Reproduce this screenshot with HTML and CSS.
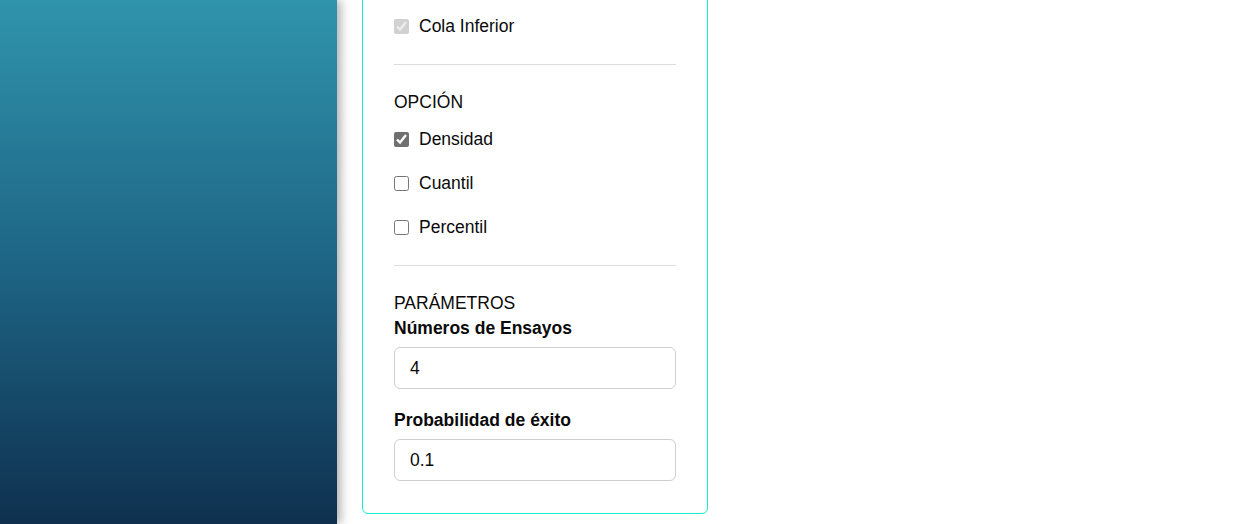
FILE: index.html
```html
<!DOCTYPE html>
<html lang="es">
<head>
<meta charset="utf-8">
<title>Binomial</title>
<link rel="stylesheet" href="styles.css">
</head>
<body>
<aside class="sidebar"></aside>
<main class="main">
  <section class="card">
    <label class="option"><input type="checkbox" checked disabled><span>Cola Inferior</span></label>
    <hr class="divider">
    <div class="group">
      <h3 class="group-title">OPCIÓN</h3>
      <div class="options">
        <label class="option"><input type="checkbox" checked><span>Densidad</span></label>
        <label class="option"><input type="checkbox"><span>Cuantil</span></label>
        <label class="option"><input type="checkbox"><span>Percentil</span></label>
      </div>
    </div>
    <hr class="divider">
    <div class="group">
      <h3 class="group-title">PARÁMETROS</h3>
      <div class="field">
        <label class="field-label" for="n">Números de Ensayos</label>
        <input class="field-input" id="n" type="text" value="4">
      </div>
      <div class="field field-second">
        <label class="field-label" for="p">Probabilidad de éxito</label>
        <input class="field-input" id="p" type="text" value="0.1">
      </div>
    </div>
  </section>
</main>
</body>
</html>
```
FILE: styles.css
```css
* { box-sizing: border-box; }
html, body {
  margin: 0;
  height: 524px;
  overflow: hidden;
  background: #fff;
}
body {
  display: flex;
  font-family: "Liberation Sans", Arial, sans-serif;
  font-size: 17.5px;
  color: #0a0a0a;
}
.sidebar {
  width: 337px;
  flex: none;
  background: linear-gradient(180deg, #3094ac 0%, #1e6585 50%, #0f304f 100%);
  box-shadow: 3px 0 10px rgba(0, 0, 0, 0.35);
  position: relative;
  z-index: 1;
}
.main {
  flex: 1;
  display: flex;
  align-items: flex-end;
  padding: 0 0 10px 25px;
}
.card {
  width: 346px;
  flex: none;
  border: 1px solid #0ff0cc;
  border-radius: 6px;
  padding: 31px 31px 32px;
  display: flex;
  flex-direction: column;
}
.option {
  display: flex;
  align-items: center;
  gap: 10px;
  height: 24px;
  line-height: 24px;
}
.option input {
  margin: 0;
  width: 15px;
  height: 15px;
  accent-color: #707070;
}
.divider {
  border: 0;
  border-top: 1px solid #dcdcdc;
  margin: 26px 0 25px;
  height: 0;
}
.group-title {
  margin: 0;
  font-weight: normal;
  font-size: 17.5px;
  line-height: 24px;
}
.options {
  display: flex;
  flex-direction: column;
  gap: 20px;
  margin-top: 13px;
}
.field {
  display: flex;
  flex-direction: column;
  margin-top: 1px;
}
.field-second { margin-top: 19px; }
.field-label {
  font-weight: bold;
  line-height: 24px;
}
.field-input {
  margin-top: 7px;
  height: 42px;
  width: 100%;
  border: 1px solid #cfcfcf;
  border-radius: 6px;
  padding: 0 15px;
  font-family: "Liberation Sans", Arial, sans-serif;
  font-size: 17.5px;
  color: #0a0a0a;
  background: #fff;
  outline: none;
}
```
